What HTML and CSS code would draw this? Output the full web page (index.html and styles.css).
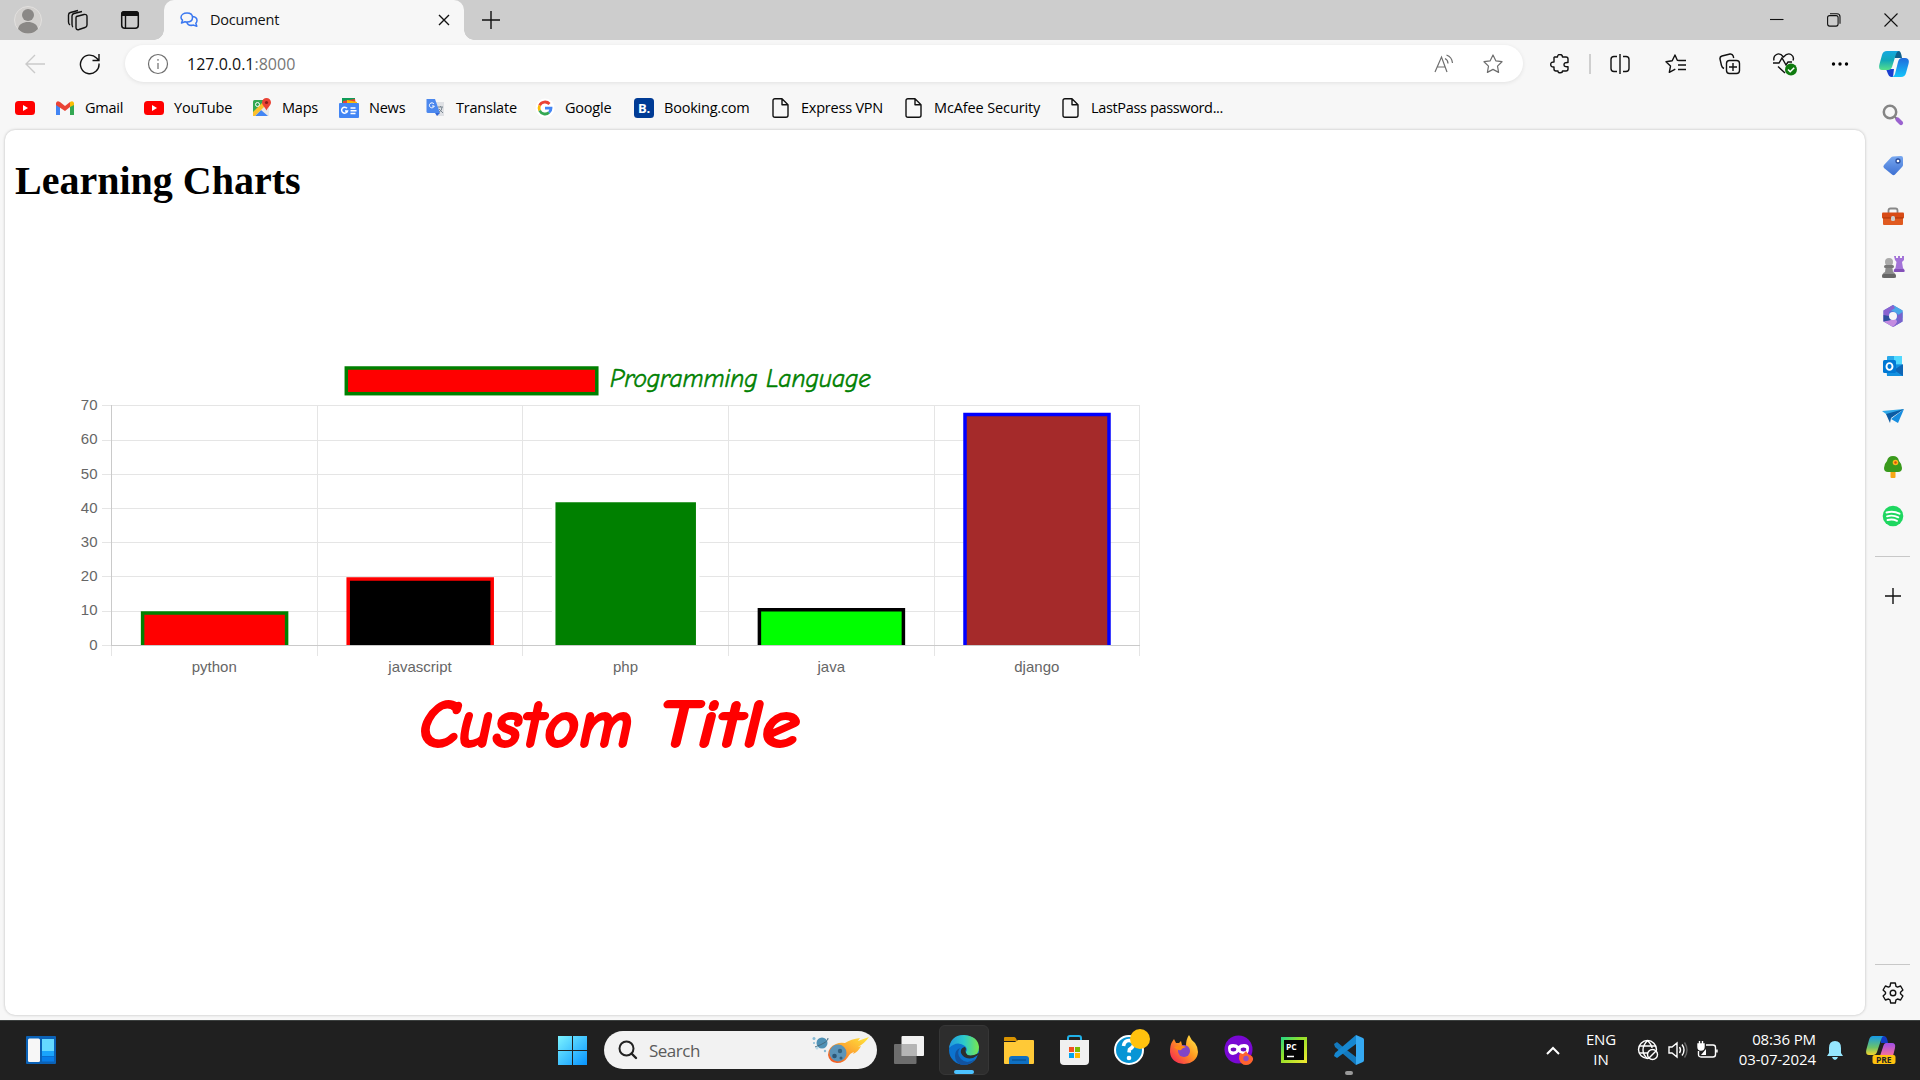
FILE: index.html
```html
<!DOCTYPE html>
<html lang="en">
<head>
<meta charset="utf-8">
<title>Document</title>
<link rel="stylesheet" href="styles.css">
</head>
<body>
<header class="tabstrip">
  <div class="slot"><svg width="28" height="28" viewBox="0 0 28 28"><circle cx="14" cy="14" r="13.5" fill="#d2d0ce" stroke="#e2e0de"/><circle cx="14" cy="9" r="6" fill="#8a8886"/><path d="M4 23c1-5 5-7 10-7s9 2 10 7c-3 3-6 4.500-10 4.500S7 26 4 23z" fill="#8a8886"/></svg></div>
  <div class="slot"><svg class="line" width="22" height="22" viewBox="0 0 22 22"><path d="M9.500 7.500 17 5.500q3-.5 3 2v8.500q0 2-2 2.500l-6 2q-3 .8-3-2V9q0-1 .5-1.500z"/><path d="M6 18Q5 17.500 5 15V7q0-2 2-2.500L15 2.500M3 16Q1.500 15 1.500 13V6q0-2 2-2.500L11 1.500"/></svg></div>
  <div class="slot"><svg width="20" height="20" viewBox="0 0 20 20"><rect x="1.700" y="1.700" width="16.600" height="16.600" rx="3" fill="none" stroke="#111" stroke-width="1.500"/><path d="M1 6V4q0-3 3-3h12q3 0 3 3v2z" fill="#111"/><path d="M5.500 6v12" stroke="#111" stroke-width="1.400"/></svg></div>
  <div class="tab">
    <svg width="18" height="16" viewBox="0 0 18 16" fill="#f7f7f7" stroke="#3b78f0" stroke-width="1.500" stroke-linejoin="round"><path d="M12.500 4.500c3 .3 4.500 2 4.500 4q0 1.700-1.200 2.800l1 3-3.300-1.200c-3.500.8-6-.6-6.800-3.100z"/><path d="M7 1c3.500 0 5.500 2 5.500 4.500S10.500 10 7 10q-1 0-2-.3L1.500 11l1-2.800Q1 7 1 5.500C1 3 3.500 1 7 1z"/></svg>
    <span class="tab-title">Document</span>
    <svg class="line" width="12" height="12" viewBox="0 0 12 12"><path d="m1 1 10 10M11 1 1 11"/></svg>
  </div>
  <div class="slot"><svg class="line" width="18" height="18" viewBox="0 0 18 18"><path d="M9 0v18M0 9h18"/></svg></div>
  <span></span>
  <div class="slot"><svg class="line thin" width="14" height="14" viewBox="0 0 14 14"><path d="M0 6.500h13.500"/></svg></div>
  <div class="slot"><svg class="line thin" width="14" height="14" viewBox="0 0 14 14"><rect x=".6" y="2.600" width="10.500" height="10.500" rx="2"/><path d="M3 .7h7q3 0 3 3v7"/></svg></div>
  <div class="slot"><svg class="line thin" width="14" height="14" viewBox="0 0 14 14"><path d="m.5.5 13 13M13.500.5l-13 13"/></svg></div>
</header>

<nav class="toolbar">
  <div class="slot"><svg class="line pale" width="20" height="20" viewBox="0 0 20 20"><path d="M20 10H1M10 1 1 10l9 9"/></svg></div>
  <div class="slot"><svg class="line" width="22" height="22" viewBox="0 0 22 22"><path d="M20 10.500A9.300 9.300 0 1 1 17.500 5L20 7.500M20 1v6.500h-6.500"/></svg></div>
  <div class="address">
    <svg class="line gray" width="22" height="22" viewBox="0 0 22 22"><circle cx="11" cy="11" r="9.500"/><path d="M11 10v6M11 6v1.700"/></svg>
    <span class="url">127.0.0.1<i>:8000</i></span>
    <svg class="line gray" width="20" height="20" viewBox="0 0 20 20"><path d="M1 18 7.500 3 13 18M3.500 13h7.500M11 4.500q3 1.500 3 5M12.500 1Q18 3 18.500 9"/></svg>
    <svg class="line gray" width="20" height="20" viewBox="0 0 20 20"><path stroke-linejoin="round" d="m10 1 2.800 5.800 6.200.9-4.500 4.400 1.100 6.300-5.600-3-5.600 3 1.100-6.300L1 7.700l6.200-.9z"/></svg>
  </div>
  <div class="slot extensions"><svg class="line" width="20" height="20" viewBox="0 0 20 20"><path stroke-linejoin="round" d="M4.500 3h3q0-2.500 2.500-2.500T12.500 3H16q2 0 2 2v3.500q-4-.3-4 2.200t4 2V15q0 2-2 2h-3.500q0 1.800-2.300 1.800T8 17H6q-2 0-2-2v-2q-3.300.2-3.300-2.500T4 8V3.500z"/></svg></div>
  <div class="rule"></div>
  <div class="slot"><svg class="line" width="20" height="20" viewBox="0 0 20 20"><path d="M7 17.500H4q-3 0-3-3v-9q0-3 3-3h3M10 0v20M13 2.500h3q3 0 3 3v9q0 3-3 3h-3"/></svg></div>
  <div class="slot"><svg class="line" width="22" height="20" viewBox="0 0 22 20"><path stroke-linejoin="round" d="m14 6.500-1.700-.3L10 1 7.200 6.800 1 7.700l4.500 4.400-1.200 6.300 6-3.300M14 6.500h7M13 11h8M13 15.500h8"/></svg></div>
  <div class="slot"><svg class="line" width="22" height="22" viewBox="0 0 22 22"><rect x="7.500" y="7.500" width="13" height="13" rx="3"/><path d="M14 10v8M10 14h8M5 15.500q-2-.8-2.500-3L1 6q-.4-2.300 2-3l8-2q2.500-.3 3.200 2l.5 2"/></svg></div>
  <div class="slot"><svg class="line" width="26" height="24" viewBox="0 0 26 24"><path d="M2 8.500Q1 4.500 4.500 2.500T11.500 5q4-4.500 7.500-2.500t2 6M1 11h6l3-5 4 7 2-3h4M6 14.500l7 6.500"/><circle cx="19" cy="17.500" r="6" fill="#0f7b0f" stroke="none"/><path d="m16 17.500 2.200 2.200 4-4" stroke="#fff" stroke-width="1.600"/></svg></div>
  <div class="slot"><svg width="18" height="6" viewBox="0 0 18 6"><circle cx="2.500" cy="3" r="1.700"/><circle cx="9" cy="3" r="1.700"/><circle cx="15.500" cy="3" r="1.700"/></svg></div>
  <div class="slot"><svg width="30" height="28" viewBox="0 0 30 28"><defs><linearGradient id="ca" x2="0" y2="1"><stop stop-color="#16a8e0"/><stop offset=".5" stop-color="#13a9b8"/><stop offset="1" stop-color="#57e08a"/></linearGradient><linearGradient id="cb" x2="0" y2="1"><stop stop-color="#1f6bdc"/><stop offset="1" stop-color="#14c4fa"/></linearGradient></defs><path d="M16 1h4q2 0 3 7h-7z" fill="#10608c"/><path d="M7 19h8l-1 8h-2q-2 0-3-3z" fill="#1a3fd0"/><path d="M8 1h12q-2 0-3 3l-4 13q-1 3-4 3H3Q-1 20 .5 14L3 5Q4 1 8 1z" fill="url(#ca)"/><path d="M22 27H12q3 0 4-3l3-12q1-4 4-4h3q5 0 3.500 6L27 23q-1 4-5 4z" fill="url(#cb)"/></svg></div>
</nav>

<div class="main">
  <div class="content">
    <div class="bookmarks">
      <a><svg width="20" height="20" viewBox="0 0 20 20"><rect y="3" width="20" height="14" rx="3.500" fill="red"/><path d="m8 7 5 3-5 3z" fill="#fff"/></svg></a>
      <a><svg width="20" height="20" viewBox="0 0 20 20"><path d="M1 17V5h4v12z" fill="#4285f4"/><path d="M15 17V5h4v12z" fill="#34a853"/><path d="M1 7V5q1-3 4-1l5 4 5-4v5l-5 4z" fill="#ea4335"/><path d="M15 9V4q3-2 4 1v2z" fill="#fbbc04"/></svg><span>Gmail</span></a>
      <a><svg width="20" height="20" viewBox="0 0 20 20"><rect y="3" width="20" height="14" rx="3.500" fill="red"/><path d="m8 7 5 3-5 3z" fill="#fff"/></svg><span>YouTube</span></a>
      <a><svg width="20" height="20" viewBox="0 0 20 20"><rect x="1" y="2" width="16" height="16" rx="1.500" fill="#34a853"/><path d="m2 18 13-13 2 2v11z" fill="#e8e8e8"/><path d="m3 18 6-6 7 6z" fill="#4285f4"/><path d="m1 14 11-11 3 3L3 18H1z" fill="#fbc02d"/><circle cx="5.500" cy="6.500" r="2" fill="none" stroke="#fff"/><path d="M14.500 0A4.500 4.500 0 0 1 19 4.500c0 3-3.500 5-4.500 8-1-3-4.500-5-4.500-8A4.500 4.500 0 0 1 14.500 0z" fill="#ea4335"/><circle cx="14.500" cy="4.500" r="1.600" fill="#8c1d18"/></svg><span>Maps</span></a>
      <a><svg width="20" height="20" viewBox="0 0 20 20"><path d="M3 0h13v8H3z" fill="#0f9d58"/><path d="m4 3 12-2 1 6H4z" fill="#ea4335"/><path d="m8 2 10 2v4H8z" fill="#fbbc04"/><rect y="5" width="20" height="15" rx="1" fill="#4285f4"/><path d="M8 10.300A3 3 0 1 0 8.500 13H6M11.500 10h5M11.500 12.700h6M11.500 15.500h5" fill="none" stroke="#fff" stroke-width="1.500"/></svg><span>News</span></a>
      <a><svg width="20" height="20" viewBox="0 0 20 20"><path d="M8 4h10v14h-7z" fill="#dfe1e5"/><path d="M1 1h8l5 14H2q-1.500 0-1.500-1.500V1z" fill="#4c88ee"/><path d="m9 15 5 0-3 3z" fill="#3367d6"/><path d="M8 6a2.500 2.500 0 1 0 .3 2H6" fill="none" stroke="#fff"/><path d="M12 9h5M14.500 8v1M16 9q0 4-3 5M13 11l4 4" fill="none" stroke="#7b8791"/></svg><span>Translate</span></a>
      <a><svg width="20" height="20" viewBox="0 0 20 20"><circle cx="10" cy="10" r="9.500" fill="#fff"/><g fill="none" stroke-width="2.800"><path d="M14.500 6A6 6 0 0 0 4.600 7.500" stroke="#ea4335"/><path d="M4.600 7.500a6 6 0 0 0 0 5" stroke="#fbbc05"/><path d="M4.600 12.500a6 6 0 0 0 9.400 2" stroke="#34a853"/><path d="M14 14.500q2-1.500 2-4.300H10" stroke="#4285f4"/></g></svg><span>Google</span></a>
      <a><svg width="20" height="20" viewBox="0 0 20 20"><rect width="20" height="20" rx="3.500" fill="#003b95"/><text x="4" y="15" class="booking-b">B.</text></svg><span>Booking.com</span></a>
      <a><svg class="line" width="20" height="20" viewBox="0 0 20 20"><path d="M4 .8h7l6 6v10.400q0 2-2 2H4q-2 0-2-2V2.800q0-2 2-2zM11 .8v6h6" stroke-linejoin="round"/></svg><span>Express VPN</span></a>
      <a><svg class="line" width="20" height="20" viewBox="0 0 20 20"><path d="M4 .8h7l6 6v10.400q0 2-2 2H4q-2 0-2-2V2.800q0-2 2-2zM11 .8v6h6" stroke-linejoin="round"/></svg><span class="wide">McAfee Security</span></a>
      <a><svg class="line" width="20" height="20" viewBox="0 0 20 20"><path d="M4 .8h7l6 6v10.400q0 2-2 2H4q-2 0-2-2V2.800q0-2 2-2zM11 .8v6h6" stroke-linejoin="round"/></svg><span class="tight">LastPass password...</span></a>
    </div>
    <main class="page">
      <h1>Learning Charts</h1>
      <svg class="chart" width="1130" height="450" viewBox="60 350 1130 450">
        <path class="grid" d="M102 405.500h1038M102 440.500h1038M102 474.500h1038M102 508.500h1038M102 542.500h1038M102 576.500h1038M102 611.500h1038M102 645.500h10M317.500 405v251M522.500 405v251M728.500 405v251M934.500 405v251M1139.500 405v251M111.500 646v10"/>
        <path class="axis" d="M111.500 405v240M111 645.500h1029"/>
        <g class="ticks">
          <text x="97.500" y="410">70</text><text x="97.500" y="444">60</text><text x="97.500" y="479">50</text><text x="97.500" y="513">40</text><text x="97.500" y="547">30</text><text x="97.500" y="581">20</text><text x="97.500" y="615">10</text><text x="97.500" y="650">0</text>
        </g>
        <g class="ticks names">
          <text x="214.300" y="672">python</text><text x="420" y="672">javascript</text><text x="625.500" y="672">php</text><text x="831.300" y="672">java</text><text x="1036.800" y="672">django</text>
        </g>
        <g class="bars">
          <path d="M142.600 645v-31.900h144V645" fill="red" stroke="green"/>
          <path d="M348.200 645v-66.100h144V645" fill="#000" stroke="red"/>
          <path d="M553.700 645V500.400h144V645" fill="green" stroke="#fff"/>
          <path d="M759.400 645v-35.200h144V645" fill="#0f0" stroke="#000"/>
          <path d="M965 645V414.600h144V645" fill="brown" stroke="#00f"/>
          <rect x="346.300" y="368" width="250.500" height="25.700" fill="red" stroke="green"/>
        </g>
        <text class="legend" x="610" y="387" textLength="261" lengthAdjust="spacingAndGlyphs">Programming Language</text>
        <text class="title" x="419" y="747" textLength="214" lengthAdjust="spacingAndGlyphs">Custom</text>
        <text class="title" x="658" y="747" textLength="142" lengthAdjust="spacingAndGlyphs">Title</text>
      </svg>
    </main>
  </div>
  <aside class="sidebar">
    <div class="side"><svg width="22" height="22" viewBox="0 0 22 22"><circle cx="8" cy="8" r="6.200" fill="none" stroke="#858585" stroke-width="2.500"/><path d="m13 13 2 2" stroke="#777" stroke-width="2"/><path d="m15.500 15.500 3.500 3.500" stroke="#9a62cf" stroke-width="4.200" stroke-linecap="round"/></svg></div>
    <div class="side"><svg width="22" height="22" viewBox="0 0 22 22"><defs><linearGradient id="tg" x2="0" y2="1"><stop stop-color="#78a8f0"/><stop offset="1" stop-color="#3d70d2"/></linearGradient></defs><path d="M11 1.500 19 1q2 0 2 2v7q0 1-1 2l-7 7.500q-1.500 1.500-3 0L2 13q-1.300-1.500 0-3l7-7.500q1-1 2-1z" fill="url(#tg)"/><circle cx="16" cy="6" r="2" fill="#fff" stroke="#2a4d9b" stroke-width="1.300"/></svg></div>
    <div class="side"><svg width="24" height="20" viewBox="0 0 24 20"><path d="M7.500 6V3.500q0-2 2-2h5q2 0 2 2V6" fill="none" stroke="#888" stroke-width="1.800"/><rect x="1" y="5.500" width="22" height="6" rx="1" fill="#d84b16"/><path d="M2 11h20v6q0 1-1 1H3q-1 0-1-1z" fill="#e05a20"/><path d="M2 11h20" stroke="#a93408"/><rect x="10" y="9" width="4" height="5" rx="1.500" fill="#ccc"/></svg></div>
    <div class="side"><svg width="24" height="24" viewBox="0 0 24 24"><circle cx="8" cy="7" r="4" fill="#aaa"/><path d="M5 10h6l1 7q3 1 3 5.500H1Q1 18 4 17z" fill="#8b8b8b"/><rect x="3" y="10" width="10" height="3" rx="1.500" fill="#777"/><rect x="1" y="19" width="14" height="4" rx="2" fill="#666"/><path d="M13 1h2v2h2V1h2v2h2V1h2v4l-2 2 1 6q1.500 1 1.500 4h-11q0-3 2-4l1-6-1.500-2z" fill="#a373d8"/><rect x="13" y="14" width="10.500" height="3" rx="1.500" fill="#8350b8"/></svg></div>
    <div class="side"><svg width="22" height="22" viewBox="0 0 22 22"><path d="m11 0 9.500 5.500v11L11 22l-9.500-5.500v-11z" fill="#5b72d9"/><path d="m11 0 9.500 5.500V13L14.500 8 8 5z" fill="#4aa9e8"/><path d="M11 0 1.500 5.500v11L7 13V7l6-4z" fill="#8a62d0"/><path d="m1.500 16.500 9.500 5.500 5-3-2-5-6 1z" fill="#c48be0"/><path d="M20.500 7v9.500L11 22q6-5 4-11z" fill="#7a63cc"/><path d="M1.500 10v6.500L9 15l-2-4z" fill="#2f4f9e"/><circle cx="11" cy="11" r="4" fill="#f7f7f7"/></svg></div>
    <div class="side"><svg width="22" height="22" viewBox="0 0 22 22"><rect x="5" y="1" width="15" height="16" rx="1" fill="#28a8ea"/><path d="M12 1h8v8h-8z" fill="#50d9ff"/><path d="M4 10h17v11H5z" fill="#1490df"/><path d="m21 9-9 6 9 6z" fill="#0f65b5"/><rect x="1" y="5" width="13" height="13" rx="1.500" fill="#0078d4"/><ellipse cx="7.500" cy="11.500" rx="3" ry="3.400" fill="none" stroke="#fff" stroke-width="1.900"/></svg></div>
    <div class="side"><svg width="22" height="18" viewBox="0 0 22 18"><path d="M0 4 22 2 8 10z" fill="#2fa8e8"/><path d="m22 2-6 14-7-4z" fill="#168de0"/><path d="m4 7 18-5L9 11l-1 5z" fill="#0c5ba3"/></svg></div>
    <div class="side"><svg width="20" height="24" viewBox="0 0 20 24"><rect x="7.500" y="16" width="5" height="7" rx="1" fill="#f7a714"/><path d="M10 1q5 0 6 5 3 3 3 7 0 4-4 4H5q-4 0-4-4 0-4 3-7 1-5 6-5z" fill="#399a1c"/><circle cx="12.500" cy="7.500" r="2.800" fill="#fcb81c"/><circle cx="12.500" cy="7.500" r="1.200" fill="#d9480f"/></svg></div>
    <div class="side"><svg width="22" height="22" viewBox="0 0 22 22"><circle cx="11" cy="11" r="10.300" fill="#1ed760"/><path d="M4.500 7.500q7-2 13 1.200M5 11.300q6-1.700 11.300 1M5.500 15q5-1.300 9.500.8" fill="none" stroke="#fff" stroke-width="1.900" stroke-linecap="round"/></svg></div>
    <hr>
    <div class="side add"><svg class="line" width="16" height="16" viewBox="0 0 16 16"><path d="M8 0v16M0 8h16"/></svg></div>
    <hr class="bottom-rule">
    <div class="side gear"><svg class="line" width="22" height="22" viewBox="0 0 22 22"><path stroke-linejoin="round" d="m8.700 1-.7 3.300-1.500.8L3.400 4 1.100 8l2.400 2.200v1.600L1.100 14l2.300 4 3.100-1 1.500.8.700 3.200h4.600l.7-3.200 1.500-.8 3.100 1 2.300-4-2.400-2.200v-1.600L20.900 8l-2.300-4-3.100 1.100-1.500-.8-.7-3.300z"/><circle cx="11" cy="11" r="2.800"/></svg></div>
  </aside>
</div>

<footer class="taskbar">
  <div class="slot widgets"><svg width="30" height="28" viewBox="0 0 30 28"><rect width="30" height="28" rx="1" fill="#0b62b7"/><rect x="2" y="2.500" width="12" height="23.500" rx="1.500" fill="#f7f7f7"/><path d="M16 3h12v12H16z" fill="#65d9ff"/><path d="M16 15h12v5H16z" fill="#1aa4fb"/><path d="M16 20.500h12v5H16z" fill="#087de8"/></svg></div>
  <div class="apps">
    <div class="app"><svg width="29" height="29" viewBox="0 0 29 29"><defs><linearGradient id="wg" x2="1" y2="1"><stop stop-color="#7cf3ff"/><stop offset="1" stop-color="#0794ff"/></linearGradient></defs><path d="M0 0h14v14H0zM15 0h14v14H15zM0 15h14v14H0zM15 15h14v14H15z" fill="url(#wg)"/></svg></div>
    <div class="search"><svg width="20" height="20" viewBox="0 0 20 20" fill="none" stroke="#222" stroke-linecap="round"><circle cx="8.500" cy="8.500" r="7" stroke-width="2"/><path d="m13.500 13.500 4.500 4.500" stroke-width="2.400"/></svg><span>Search</span>
      <svg width="58" height="28" viewBox="0 0 58 28"><defs><linearGradient id="cm" x1="1" x2="0" y2="1"><stop stop-color="#ffe83b"/><stop offset=".5" stop-color="#fda832"/><stop offset="1" stop-color="#ed4b23"/></linearGradient></defs><path d="M57 1 46 5l2-3q-9 1-15 5-5-1-9 1-8 3-8 11 1 7 9 8 7 0 11-6 2-4 6-5l-1 2q6-3 8-8l-3 1q7-4 11-10z" fill="url(#cm)"/><circle cx="26" cy="17" r="8.500" fill="#5b94b8"/><circle cx="22.500" cy="20" r="2.300" fill="#2c5878"/><circle cx="28" cy="15" r="2.200" fill="#34627f"/><circle cx="29" cy="22" r="1.500" fill="#315d7b"/><circle cx="10" cy="7" r="5.500" fill="#4f91b5"/><path d="M3 11Q17 6 16 2" fill="none" stroke="#446b7f"/><circle cx="2" cy="2.500" r="1.500" fill="#87bbd5"/><circle cx="2" cy="7" r="1" fill="#87bbd5"/><circle cx="13" cy="15" r="1.200" fill="#87bbd5"/><circle cx="5" cy="12" r="1.500" fill="#b7d8e8"/></svg></div>
    <div class="app"><svg width="30" height="28" viewBox="0 0 30 28"><rect x="7.500" width="22.500" height="20" rx="1" fill="#f2f2f2"/><rect y="8" width="22.500" height="20" rx="1" fill="#757575" fill-opacity=".9"/><path d="M7.500 8h15v12h-15z" fill="#b5b5b5"/></svg></div>
    <div class="app active"><svg width="30" height="30" viewBox="0 0 30 30"><defs><linearGradient id="eg"><stop stop-color="#2199df"/><stop offset=".5" stop-color="#2ccacb"/><stop offset="1" stop-color="#78e84d"/></linearGradient></defs><circle cx="15" cy="15" r="15" fill="#0c73cf"/><path d="M0 13Q2 0 15 0q14 1 15 12 0 9-8 9-6-1-5-4 2-3-1-6-8-6-16 2z" fill="url(#eg)"/><path d="M11 13q-4 6 1 11 6 6 14 0-5 7-13 6-7-2-7-9 0-6 5-8z" fill="#1253a0"/><path d="M16 12q-5 1-4 6 3 7 12 5l5-3-2 4 5-4-2-2q-11 5-13 0-1-2 0-4z" fill="#2d2d2d"/></svg></div>
    <div class="app"><svg width="30" height="27" viewBox="0 0 30 27"><path d="M0 1q0-1 1-1h9q2 0 3 4H0z" fill="#d99300"/><path d="M0 5h11l3-2h15q1 0 1 1v22q0 1-1 1H1q-1 0-1-1z" fill="#ffc937"/><path d="M5 27v-5q0-3 3-3h14q3 0 3 3v5z" fill="#0f70c3"/><path d="M8 23h14" stroke="#064982"/></svg></div>
    <div class="app"><svg width="29" height="30" viewBox="0 0 29 30"><path d="M8 8V3q0-2 2-2h9q2 0 2 2v5" fill="none" stroke="#20b1e7" stroke-width="2"/><path d="M0 5h29v21q0 4-4 4H4q-4 0-4-4z" fill="#f0f0f0"/><path d="M9 12h5v5H9z" fill="#f25022"/><path d="M15 12h5v5h-5z" fill="#7fba00"/><path d="M9 18h5v5H9z" fill="#00a4ef"/><path d="M15 18h5v5h-5z" fill="#ffb900"/></svg></div>
    <div class="app"><svg class="helpicon" width="36" height="36" viewBox="0 0 36 36"><circle cx="15" cy="21" r="14" fill="#0795d5" stroke="#fff" stroke-width="2"/><path d="M9.500 17q1-6 6-5.500 5 1 4 5-1 2-4 4l-.5 3" fill="none" stroke="#fff" stroke-width="3.600"/><circle cx="15" cy="29" r="2.300" fill="#fff"/><circle cx="26" cy="10" r="10" fill="#ffc20e"/></svg></div>
    <div class="app"><svg width="30" height="30" viewBox="0 0 30 30"><defs><linearGradient id="ff" x1="1" x2="0" y2="1"><stop stop-color="#fff44f"/><stop offset=".45" stop-color="#ff9a20"/><stop offset="1" stop-color="#f4145b"/></linearGradient></defs><path d="M3 7l2-3 2 4 3 0 2-2 1 4 4 1q0-7 3-11 2 5 6 8 3 4 3 9-1 11-14 12Q2 28 1 17 1 10 3 7z" fill="url(#ff)"/><circle cx="15" cy="16" r="6" fill="#8045c8"/><path d="M5 12q7-3 12 0-4 1-5 3-4 1-7-3z" fill="#ff8a16"/></svg></div>
    <div class="app"><svg width="30" height="30" viewBox="0 0 30 30"><circle cx="14.500" cy="14.500" r="14" fill="#7908d3"/><path d="M4 13q0-4 5-4 4 0 5.500 2Q16 9 20 9q5 0 5 4 0 7-5 7-3 0-5.500-3-2.500 3-5.500 3-5 0-5-7z" fill="#fff"/><ellipse cx="9.500" cy="14.500" rx="2.800" ry="1.900" fill="#7008bd"/><ellipse cx="19.500" cy="14.500" rx="2.800" ry="1.900" fill="#7008bd"/><path d="m16 18 3 1 3-3 2 3q6 2 5 6-2 5-7 5t-7-6q0-4 1-6z" fill="#ff632f"/><circle cx="22" cy="23.500" r="2.700" fill="#9250c5"/></svg></div>
    <div class="app"><svg width="26" height="26" viewBox="0 0 26 26"><defs><linearGradient id="pc" x2="1" y2="1"><stop stop-color="#21d789"/><stop offset=".4" stop-color="#8fe02a"/><stop offset="1" stop-color="#f4e830"/></linearGradient></defs><rect width="26" height="26" fill="url(#pc)"/><path d="M3 3h20v20H3z" fill="#050505"/><text x="5" y="13" class="pycharm-pc">PC</text><path d="M6 19.500h7" stroke="#fff" stroke-width="1.500"/></svg></div>
    <div class="app running"><svg width="30" height="30" viewBox="0 0 30 30"><path d="m0 9 3-2q8 7 19 15v8L1 12z" fill="#1479bd"/><path d="m0 21 3 2L22 9V0L1 18z" fill="#1687d0"/><path d="m22 0 7 3q1 .5 1 2v20q0 1.500-1 2l-7 3z" fill="#35a9f2"/></svg></div>
  </div>
  <div class="tray">
    <div class="slot"><svg width="14" height="9" viewBox="0 0 14 9"><path d="m1 8 6-6 6 6" fill="none" stroke="#fff" stroke-width="2"/></svg></div>
    <div class="lang">ENG<br>IN</div>
    <div class="slot"><svg class="line white" width="22" height="22" viewBox="0 0 22 22"><circle cx="10.500" cy="10.500" r="9"/><path d="M2 7h17M2 14h9M10.500 1.500Q6 6 6 11t4.500 8.500M10.500 1.500Q15 6 15 9"/><circle cx="15.500" cy="15.500" r="5" fill="#202020"/><path d="m12 19 7-7"/></svg></div>
    <div class="slot"><svg class="line white" width="20" height="18" viewBox="0 0 20 18"><path d="M1 6h3l5-4v14l-5-4H1zM11.500 6q2 3 0 6M14 3.500q4 5.500 0 11"/><path d="M16.500 1.500q5 7.500 0 15" stroke="#666"/></svg></div>
    <div class="slot"><svg class="line white" width="22" height="18" viewBox="0 0 22 18"><path d="M9 4h7q2.500 0 2.500 2.500v7q0 2.500-2.500 2.500H4q-2.500 0-2.500-2.500V10M20 8.500v3"/><path d="M2.500 0v3M5.500 0v3M1 3h6v3q0 3-3 3T1 6z" fill="#fff"/><path d="M9 8v6H4z" fill="#fff" stroke="none"/></svg></div>
    <div class="clock">08:36 PM<br>03-07-2024</div>
    <div class="slot"><svg width="18" height="20" viewBox="0 0 18 20"><path d="M9 1q6 0 6 7v5l2 3H1l2-3V8q0-7 6-7zM6 17h6q-1 3-3 3t-3-3z" fill="#95e7ff"/></svg></div>
    <div class="slot"><svg width="30" height="28" viewBox="0 0 30 28"><defs><linearGradient id="cp" x2="0" y2="1"><stop stop-color="#169be8"/><stop offset=".6" stop-color="#6bc26a"/><stop offset="1" stop-color="#f5d52c"/></linearGradient><linearGradient id="cq" x2="0" y2="1"><stop stop-color="#a04ee8"/><stop offset="1" stop-color="#fb7297"/></linearGradient></defs><path d="M15 0h3q3 0 4 7h-7z" fill="#123bc4"/><path d="M7 0h11q-2 0-3 4l-4 12q-1 3-4 3H3Q-1 19 .500 13L3 4Q4 0 7 0z" fill="url(#cp)"/><path d="M20 7h6q4 0 3 5l-2 8H14l3-9q1-4 3-4z" fill="url(#cq)"/><rect x="6.500" y="19" width="23" height="9" rx="2" fill="#ffc20e"/><text x="10" y="26.700" class="pre">PRE</text></svg></div>
  </div>
</footer>
</body>
</html>
```
FILE: styles.css
```css
* { box-sizing: border-box; }
body {
  margin: 0;
  width: 1920px;
  height: 1080px;
  overflow: hidden;
  display: flex;
  flex-direction: column;
  background: #f7f7f7;
  color: #111;
  font-family: "Segoe UI", "Open Sans", "Noto Sans", sans-serif;
  font-size: 14.5px;
}
svg { display: block; flex: none; }
.slot, .side, .app { display: flex; align-items: center; justify-content: center; }
.line { fill: none; stroke: #111; stroke-width: 1.4; }
.line.thin { stroke-width: 1.1; }
.line.gray { stroke: #6e6e6e; stroke-width: 1.2; }
.line.pale { stroke: #cacaca; }
.line.white { stroke: #fff; stroke-width: 1.4; }

.tabstrip {
  height: 40px;
  flex: none;
  display: grid;
  grid-template-columns: 56px 43px 62px 306px 48px 1fr 57px 57px 58px;
  background: #cdcdcd;
}
.tab {
  position: relative;
  margin: 0 3px;
  display: flex;
  align-items: center;
  padding: 0 14px 0 16px;
  background: #f7f7f7;
  border-radius: 10px 10px 0 0;
}
.tab::before, .tab::after {
  content: "";
  position: absolute;
  bottom: 0;
  width: 10px;
  height: 10px;
}
.tab::before { left: -10px; background: radial-gradient(circle at 0 0, #cdcdcd 9.5px, #f7f7f7 10px); }
.tab::after { right: -10px; background: radial-gradient(circle at 100% 0, #cdcdcd 9.5px, #f7f7f7 10px); }
.tab-title { margin-left: 12px; padding-bottom: 2px; flex: 1; letter-spacing: -.2px; }

.toolbar {
  height: 48px;
  flex: none;
  display: grid;
  grid-template-columns: 70px 40px 1413px 66px 2px 57px 55px 54px 56px 54px 53px;
  align-items: center;
}
.extensions { padding-left: 7px; }
.rule { height: 20px; background: #cfcfcf; }
.address {
  height: 37px;
  margin: -1px 0 0 15px;
  padding: 0 20px 0 22px;
  display: flex;
  align-items: center;
  background: #fff;
  border-radius: 19px;
  box-shadow: 0 1px 4px rgba(0, 0, 0, .09);
}
.url { flex: 1; margin-left: 18px; font-size: 16px; }
.url i { font-style: normal; color: #767676; }
.address svg + svg { margin-left: 29px; }

.main { flex: 1; min-height: 0; display: grid; grid-template-columns: 1866px 54px; }
.content { display: flex; flex-direction: column; padding: 0 1px 5px 5px; }
.bookmarks {
  height: 42px;
  flex: none;
  display: grid;
  grid-template-columns: 40px 89px 108px 87px 87px 109px 99px 137px 133px 157px 1fr;
  align-items: center;
  padding: 0 0 3px 10px;
  color: #000;
}
.bookmarks a { display: flex; align-items: center; gap: 10px; height: 22px; white-space: nowrap; letter-spacing: -.22px; }
.bookmarks .wide { letter-spacing: -.12px; }
.bookmarks .tight { letter-spacing: -.35px; }
.booking-b { font: bold 13px "Open Sans", sans-serif; fill: #fff; }

.page {
  flex: 1;
  background: #fff;
  border-radius: 10px;
  box-shadow: 0 0 3px rgba(0, 0, 0, .25);
}
h1 {
  margin: 0;
  padding: 27px 10px 0;
  height: 220px;
  color: #000;
  font: bold 40px/48px "Times New Roman", "Liberation Serif", serif;
}
.chart { margin-left: 55px; }
.grid { fill: none; stroke: #e5e5e5; }
.axis { fill: none; stroke: #cacaca; }
.ticks { font: 15px Arial, "Liberation Sans", sans-serif; fill: #666; text-anchor: end; }
.names { text-anchor: middle; }
.bars { stroke-width: 3.5; }
.legend, .title {
  font-family: "Comic Sans MS", "Comic Neue", "Open Sans", sans-serif;
  font-style: italic;
}
.legend { font-size: 27px; fill: green; stroke: green; stroke-width: .5; }
.title { font-size: 68px; font-weight: 700; fill: red; stroke: red; stroke-width: 1.8; stroke-linejoin: round; }

.sidebar { display: flex; flex-direction: column; align-items: center; padding: 1px 1px 0 0; }
.side { height: 50px; width: 52px; flex: none; }
.side:nth-child(1) { height: 52px; }
.side:nth-child(3), .side:nth-child(8) { height: 51px; }
.side:nth-child(4) { height: 49px; }
.side:nth-child(9) { height: 48px; }
.sidebar hr { width: 35px; height: 1px; flex: none; margin: 16px 0 0; border: 0; background: #c8c8c8; }
.side.add { height: 77px; }
.sidebar .bottom-rule { margin: auto 0 0; }
.side.gear { height: 55px; }

.taskbar {
  height: 60px;
  flex: none;
  display: grid;
  grid-template-columns: 547px 827px 1fr;
  background: #202020;
  border-top: 1px solid #3c403f;
  padding-bottom: 1px;
  color: #fff;
}
.widgets { width: 82px; }
.apps { display: flex; align-items: center; gap: 5px; }
.app { position: relative; width: 50px; height: 50px; border-radius: 6px; flex: none; }
.app.active { background: #2d2d2d; border: 1px solid #363636; }
.app.active::after, .app.running::after {
  content: "";
  position: absolute;
  bottom: 0;
  width: 20px;
  height: 4px;
  border-radius: 2px;
  background: #4cc2ff;
}
.app.running::after { width: 8px; background: #999; }
.helpicon { margin: -6px 0 0 6px; }
.search {
  flex: none;
  width: 273px;
  height: 38px;
  margin: 0 2px;
  padding: 0 7px 0 14px;
  display: flex;
  align-items: center;
  background: #f2f2f2;
  border-radius: 19px;
  color: #5b5b5b;
  font-size: 17px;
}
.search span { flex: 1; margin-left: 11px; letter-spacing: -.5px; }
.pycharm-pc { font: bold 8.5px "Open Sans", sans-serif; fill: #fff; }
.tray {
  display: grid;
  grid-template-columns: 32px 64px 30px 29px 32px 96px 30px 61px;
  justify-content: end;
  align-items: center;
  padding-right: 9px;
  font-size: 15px;
  line-height: 20px;
  letter-spacing: -.1px;
}
.lang { text-align: center; padding-bottom: 2px; }
.clock { text-align: right; white-space: nowrap; padding: 0 4px 3px 0; }
.pre { font: bold 8.5px "Open Sans", sans-serif; fill: #222; }
```
